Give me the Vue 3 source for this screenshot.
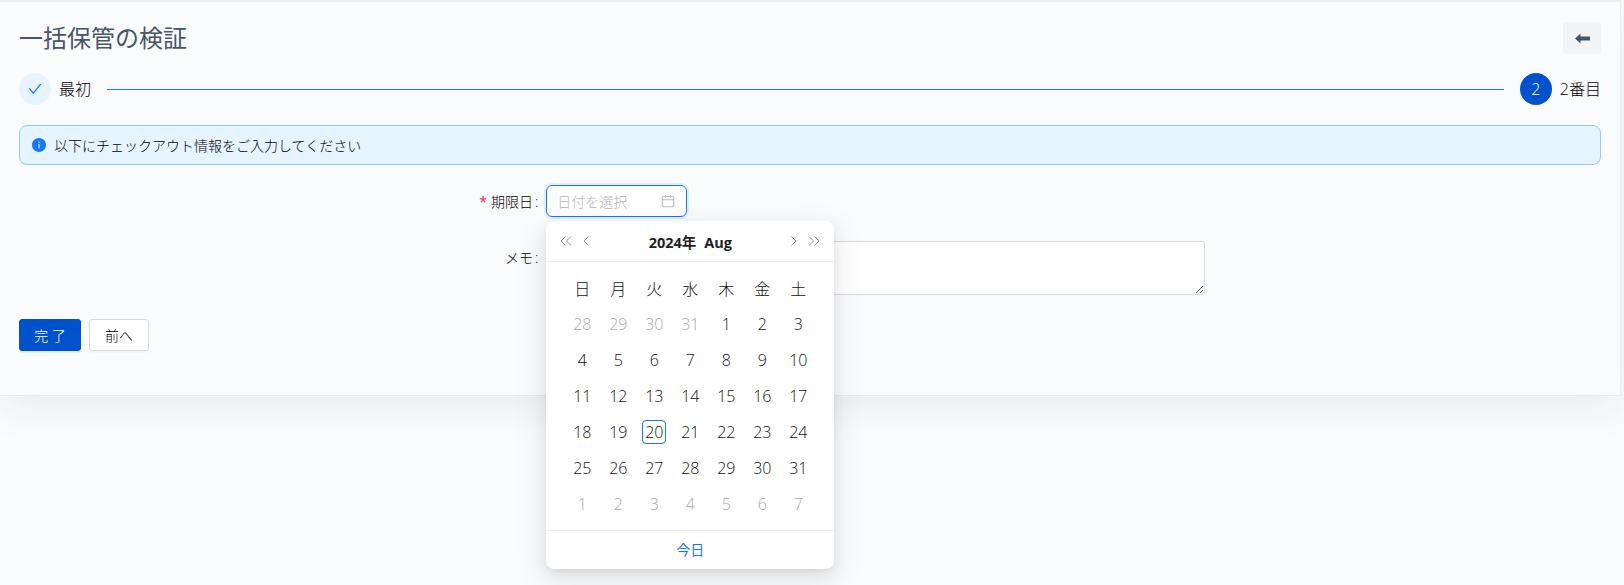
<script setup>
// 2024年8月のカレンダー(先頭は日曜)
const weekDays = ['日', '月', '火', '水', '木', '金', '土']

const cells = []
for (let d = 28; d <= 31; d++) cells.push({ day: d, muted: true })
for (let d = 1; d <= 31; d++) cells.push({ day: d, today: d === 20 })
for (let d = 1; d <= 7; d++) cells.push({ day: d, muted: true })
</script>

<template>
  <div class="page">
    <section class="card">
      <header class="card-head">
        <h1 class="title">一括保管の検証</h1>
        <button class="back" type="button" aria-label="戻る">
          <svg viewBox="0 0 15 11" width="15" height="11">
            <path d="M0 5.500 5.500 .5V3.500H15V7.500H5.500V10.500Z" fill="#475569" />
          </svg>
        </button>
      </header>

      <div class="steps">
        <div class="step">
          <span class="dot dot--done">
            <svg viewBox="64 64 896 896" width="14" height="14">
              <path fill="#1677ff" d="M912 190h-69.9c-9.8 0-19.1 4.5-25.1 12.2L404.7 724.5 207 474a32 32 0 0 0-25.1-12.2H112c-6.7 0-10.4 7.7-6.3 12.9l273.9 347c12.8 16.2 37.4 16.2 50.3 0l488.4-618.9c4.1-5.1.4-12.8-6.3-12.8z" />
            </svg>
          </span>
          <span class="step-label">最初</span>
        </div>
        <div class="step-line"></div>
        <div class="step">
          <span class="dot dot--active">2</span>
          <span class="step-label">2番目</span>
        </div>
      </div>

      <div class="alert">
        <svg viewBox="64 64 896 896" width="14" height="14">
          <path fill="#1677ff" d="M512 64C264.6 64 64 264.6 64 512s200.6 448 448 448 448-200.6 448-448S759.4 64 512 64zm32 664c0 4.4-3.6 8-8 8h-48c-4.4 0-8-3.6-8-8V456c0-4.4 3.6-8 8-8h48c4.4 0 8 3.6 8 8v272zm-32-344a48.01 48.01 0 0 1 0-96 48.01 48.01 0 0 1 0 96z" />
        </svg>
        <span>以下にチェックアウト情報をご入力してください</span>
      </div>

      <form class="form" @submit.prevent>
        <div class="row">
          <label class="label"><span class="req">*</span>期限日</label>
          <div class="control">
            <div class="picker">
              <span class="placeholder">日付を選択</span>
              <svg viewBox="64 64 896 896" width="14" height="14">
                <path fill="#bfbfbf" d="M880 184H712v-64c0-4.4-3.6-8-8-8h-56c-4.4 0-8 3.6-8 8v64H384v-64c0-4.4-3.6-8-8-8h-56c-4.4 0-8 3.6-8 8v64H144c-17.7 0-32 14.3-32 32v664c0 17.7 14.3 32 32 32h736c17.7 0 32-14.3 32-32V216c0-17.7-14.3-32-32-32zm-40 656H184V460h656v380zM184 392V256h128v48c0 4.4 3.6 8 8 8h56c4.4 0 8-3.6 8-8v-48h256v48c0 4.4 3.6 8 8 8h56c4.4 0 8-3.6 8-8v-48h128v136H184z" />
              </svg>
            </div>

            <!-- 日付ピッカーのドロップダウン -->
            <div class="dropdown">
              <div class="dd-head">
                <div class="nav">
                  <svg viewBox="0 0 12 10" width="12" height="10"><path d="M5.500 .5 1 5l4.500 4.500M11 .5 6.500 5 11 9.500" /></svg>
                  <svg viewBox="0 0 6 10" width="6" height="10"><path d="M5.500 .5 1 5l4.500 4.500" /></svg>
                </div>
                <div class="dd-title">2024年<span class="dd-month">Aug</span></div>
                <div class="nav">
                  <svg viewBox="0 0 6 10" width="6" height="10"><path d="M.5 .5 5 5 .5 9.500" /></svg>
                  <svg viewBox="0 0 12 10" width="12" height="10"><path d="M1 .5 5.500 5 1 9.500M6.500 .5 11 5 6.500 9.500" /></svg>
                </div>
              </div>
              <div class="dd-body">
                <div class="grid">
                  <span v-for="w in weekDays" :key="w" class="cell">{{ w }}</span>
                  <span
                    v-for="(c, i) in cells"
                    :key="i"
                    class="cell"
                    :class="{ 'cell--muted': c.muted, 'cell--today': c.today }"
                  ><span class="cell-in">{{ c.day }}</span></span>
                </div>
              </div>
              <div class="dd-foot">今日</div>
            </div>
          </div>
        </div>

        <div class="row">
          <label class="label">メモ</label>
          <div class="control control--wide">
            <textarea class="memo"></textarea>
          </div>
        </div>
      </form>

      <div class="actions">
        <button class="btn btn--primary" type="button">完 了</button>
        <button class="btn" type="button">前へ</button>
      </div>
    </section>
  </div>
</template>

<style>
html, body {
  margin: 0;
  background: #fafbfd;
}
</style>

<style scoped>
.page {
  height: 585px;
  box-sizing: border-box;
  padding-right: 3px;
  overflow: hidden;
  font-family: "Open Sans", "Noto Sans CJK JP", sans-serif;
  font-size: 14px;
  color: #000;
}

.card {
  height: 396px;
  box-sizing: border-box;
  padding: 0 19px;
  background: #fafbfd;
  border-top: 2px solid #eeeef1;
  border-right: 1px solid #eceef1;
  border-bottom: 1px solid #e8e9ed;
  box-shadow: 0 10px 40px rgba(30, 40, 70, 0.08);
}

.card-head {
  display: flex;
  justify-content: space-between;
  align-items: center;
  height: 32px;
  padding-top: 20px;
}

.title {
  margin: 0;
  font-size: 24px;
  font-weight: 400;
  line-height: 32px;
  color: #475569;
}

.back {
  display: flex;
  align-items: center;
  justify-content: center;
  width: 38px;
  height: 32px;
  padding: 0;
  border: none;
  border-radius: 3px;
  background: #f3f4f6;
}

.steps {
  display: flex;
  align-items: center;
  margin-top: 19px;
}

.step {
  display: flex;
  align-items: center;
  gap: 8px;
}

.step-line {
  flex: 1;
  height: 1px;
  margin: 0 16px;
  background: #1677ff;
}

.step-label {
  font-size: 16px;
  font-weight: 300;
  line-height: 32px;
  color: #000;
}

.dot {
  display: flex;
  align-items: center;
  justify-content: center;
  width: 32px;
  height: 32px;
  border-radius: 50%;
  font-size: 16px;
  font-weight: 300;
}

.dot--done {
  background: #e6f4ff;
}

.dot--active {
  background: #0052cc;
  color: #fff;
}

.alert {
  display: flex;
  align-items: center;
  gap: 8px;
  height: 40px;
  box-sizing: border-box;
  margin-top: 20px;
  padding: 0 12px;
  border: 1px solid #91caff;
  border-radius: 8px;
  background: #e6f4ff;
  font-weight: 300;
}

.form {
  margin-top: 20px;
}

.row {
  display: grid;
  grid-template-columns: 8fr 16fr;
  margin-bottom: 24px;
}

.label {
  display: flex;
  justify-content: flex-end;
  align-items: center;
  height: 32px;
  padding-right: 8px;
  font-weight: 300;
}

.label::after {
  content: ":";
  margin-left: 2px;
}

.req {
  margin-right: 4px;
  font-weight: 400;
  color: #f5222d;
}

.control {
  position: relative;
}

.control--wide {
  width: 62.5%;
}

.picker {
  display: flex;
  justify-content: space-between;
  align-items: center;
  width: 141px;
  height: 32px;
  box-sizing: border-box;
  padding: 0 11px 0 10px;
  border: 1px solid #1677ff;
  border-radius: 6px;
  background: #fff;
  box-shadow: 0 0 0 2px rgba(5, 145, 255, 0.1);
}

.placeholder {
  font-size: 14px;
  font-weight: 300;
  color: #b5b5b5;
}

.memo {
  display: block;
  width: 100%;
  height: 54px;
  box-sizing: border-box;
  border: 1px solid #d9d9d9;
  border-radius: 3px;
  background: #fff;
  outline: none;
}

.dropdown {
  position: absolute;
  top: 36px;
  left: 0;
  z-index: 5;
  width: 288px;
  height: 348px;
  border-radius: 8px;
  background: #fff;
  box-shadow: 0 6px 16px rgba(0, 0, 0, 0.08), 0 3px 6px -4px rgba(0, 0, 0, 0.12), 0 9px 28px 8px rgba(0, 0, 0, 0.05);
}

.dd-head {
  display: flex;
  justify-content: space-between;
  align-items: center;
  height: 40px;
  padding: 0 14px;
  border-bottom: 1px solid #f0f0f0;
}

.nav {
  display: flex;
  align-items: center;
  gap: 11px;
}

.nav svg {
  fill: none;
  stroke: #9a9a9a;
  stroke-width: 1;
}

.dd-title {
  font-size: 14.500px;
  font-weight: 700;
  color: #1f1f1f;
}

.dd-month {
  margin-left: 8px;
}

.dd-body {
  padding: 8px 18px 0;
}

.grid {
  display: grid;
  grid-template-columns: repeat(7, 36px);
  grid-auto-rows: 36px;
}

.cell {
  display: flex;
  align-items: center;
  justify-content: center;
  font-size: 16px;
  font-weight: 300;
  color: #111;
}

.cell-in {
  display: flex;
  align-items: center;
  justify-content: center;
  min-width: 24px;
  height: 24px;
  box-sizing: border-box;
  border-radius: 4px;
}

.cell--muted {
  color: #aaa;
}

.cell--today .cell-in {
  border: 1px solid #1677ff;
}

.dd-foot {
  margin-top: 8px;
  height: 38px;
  line-height: 38px;
  border-top: 1px solid #f0f0f0;
  text-align: center;
  font-weight: 400;
  color: #1677ff;
}

.actions {
  display: flex;
  gap: 8px;
}

.btn {
  height: 32px;
  padding: 0 15px;
  border: 1px solid #d9d9d9;
  border-radius: 3px;
  background: #fff;
  font-family: inherit;
  font-size: 14px;
  font-weight: 300;
  white-space: nowrap;
  color: #000;
  box-shadow: 0 2px 0 rgba(0, 0, 0, 0.02);
}

.btn--primary {
  width: 62px;
  padding: 0;
  border-color: #0052cc;
  background: #0052cc;
  color: #fff;
  box-shadow: 0 2px 0 rgba(5, 145, 255, 0.1);
}
</style>
